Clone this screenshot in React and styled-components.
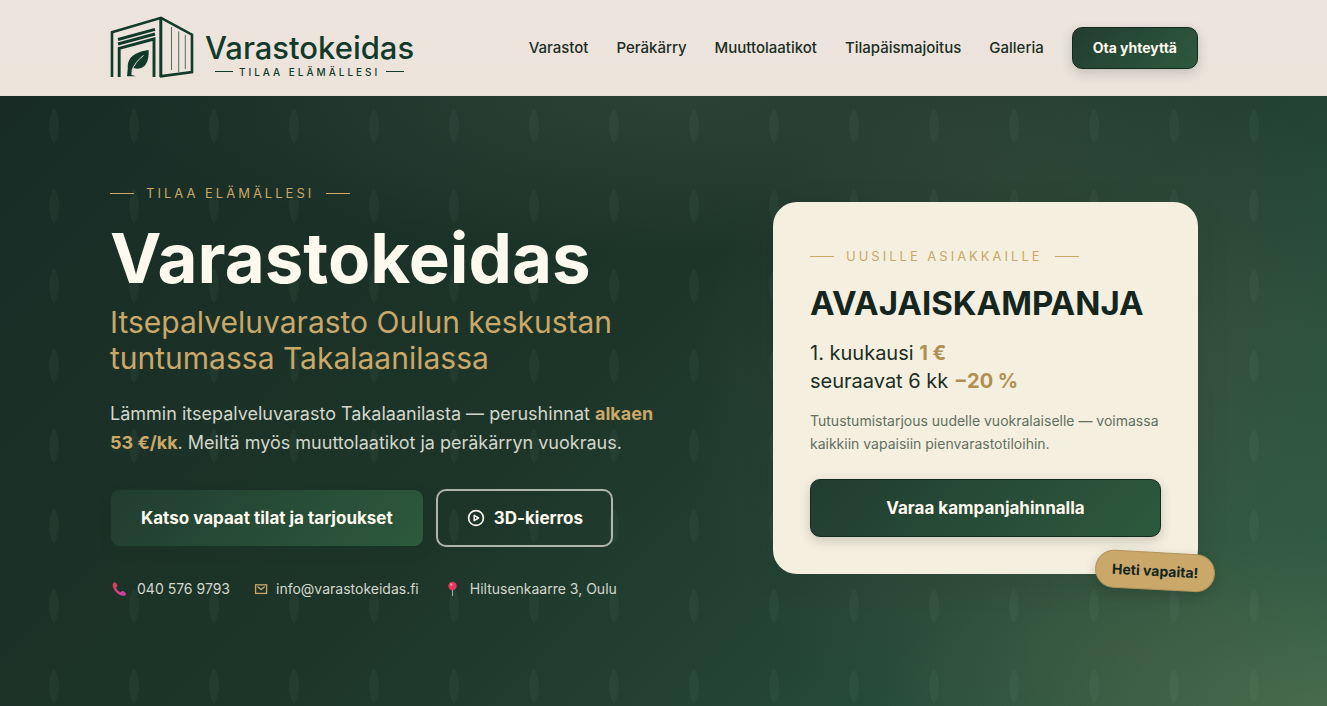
import React from "react"
import styled, { createGlobalStyle } from "styled-components"

const GlobalStyle = createGlobalStyle`
  * {
    box-sizing: border-box;
  }
  body {
    margin: 0;
    background: #1c3228;
    font-family: "Inter", sans-serif;
    color: #1a2e24;
  }
  h1, h2, p {
    margin: 0;
  }
`

const Page = styled.div`
  min-height: 100vh;
  display: flex;
  flex-direction: column;
`

const HeaderBar = styled.header`
  background: linear-gradient(180deg, #ede4df 0%, #ece3da 100%);
  border-bottom: 1px solid #e6dfd2;
  padding: 0 19px 0 0;
`

const Container = styled.div`
  width: 100%;
  max-width: 1088px;
  margin: 0 auto;
`

const HeaderInner = styled(Container)`
  min-height: 95px;
  display: flex;
  align-items: center;
  justify-content: space-between;
`

const Logo = styled.a`
  display: flex;
  align-items: center;
  gap: 11px;
  color: #123a2a;
  text-decoration: none;
`

const LogoMark = styled.svg`
  width: 84px;
  height: 64px;
`

const LogoWords = styled.span`
  display: flex;
  flex-direction: column;
  align-items: center;
  padding-top: 12px;
`

const LogoName = styled.span`
  font-size: 31px;
  line-height: 36px;
  font-weight: 500;
`

const LogoTag = styled.span`
  display: flex;
  align-items: center;
  gap: 6px;
  font-size: 10px;
  line-height: 12px;
  font-weight: 500;
  letter-spacing: 3px;

  &::before,
  &::after {
    content: "";
    width: 18px;
    height: 1px;
    background: #123a2a;
  }
`

const Nav = styled.nav`
  display: flex;
  align-items: center;
  gap: 28px;
`

const NavLink = styled.a`
  font-size: 15px;
  line-height: 24px;
  font-weight: 500;
  color: #1a2e24;
  text-decoration: none;
`

const PrimaryLink = styled.a`
  display: flex;
  align-items: center;
  justify-content: center;
  min-height: ${props => (props.$small ? "42px" : "58px")};
  padding: 0 ${props => (props.$small ? "20px" : "30px")};
  border: 1px solid ${props => (props.$dim ? "#193427" : "#16291f")};
  border-radius: 10px;
  background: linear-gradient(135deg, #213d30 0%, #2d5a3d 100%);
  background-origin: border-box;
  box-shadow: 0 4px 12px rgba(26, 46, 36, 0.2);
  color: #fdf9ee;
  font-size: ${props => (props.$small ? "14px" : "17px")};
  font-weight: 700;
  text-decoration: none;
  white-space: nowrap;
`

const OutlineLink = styled.a`
  display: flex;
  align-items: center;
  gap: 9px;
  min-height: 58px;
  padding: 0 28px 0 29px;
  border: 2px solid rgba(253, 249, 238, 0.65);
  border-radius: 10px;
  color: #fdf9ee;
  font-size: 17px;
  font-weight: 700;
  text-decoration: none;
  white-space: nowrap;
`

const Hero = styled.main`
  position: relative;
  flex: 1;
  padding: 80px 19px 80px 0;
  background:
    radial-gradient(ellipse 42% 26% at 50% 0%, rgba(245, 239, 223, 0.08), transparent 100%),
    radial-gradient(ellipse 28% 60% at 80% 50%, rgba(201, 168, 106, 0.13), transparent 100%),
    radial-gradient(ellipse 34% 28% at 100% 100%, rgba(201, 168, 106, 0.17), transparent 100%),
    linear-gradient(135deg, #182c25 0%, #1d3529 45%, #244535 70%, #2f5f47 100%);
`

const LeafPattern = styled.svg`
  position: absolute;
  inset: 0;
  width: 100%;
  height: 100%;
`

const HeroGrid = styled(Container)`
  position: relative;
  display: grid;
  grid-template-columns: minmax(0, 7fr) minmax(0, 5fr);
  column-gap: 68px;
  align-items: center;
`

const Intro = styled.div`
  display: flex;
  flex-direction: column;
  align-items: flex-start;
`

const Eyebrow = styled.p`
  display: flex;
  align-items: center;
  gap: 12px;
  color: #c9a86a;
  font-size: 13px;
  line-height: 35px;
  font-weight: 400;
  letter-spacing: 3px;
  text-transform: uppercase;

  &::before,
  &::after {
    content: "";
    width: 24px;
    height: 1px;
    background: #c9a86a;
  }
`

const Title = styled.h1`
  margin-top: 9px;
  color: #fdf9ee;
  font-size: 69px;
  line-height: 76px;
  font-weight: 700;
`

const Subtitle = styled.p`
  margin-top: 8px;
  color: #c9a86a;
  font-size: 30px;
  line-height: 36px;
`

const Lead = styled.p`
  max-width: 560px;
  margin-top: 23px;
  color: #d3d7cb;
  font-size: 18px;
  line-height: 29px;

  strong {
    color: #c9a86a;
    font-weight: 700;
  }
`

const Actions = styled.div`
  display: flex;
  flex-wrap: wrap;
  gap: 12px;
  margin-top: 32px;
`

const Contacts = styled.div`
  display: flex;
  flex-wrap: wrap;
  gap: 24px;
  margin-top: 32px;
`

const Contact = styled.a`
  display: flex;
  align-items: center;
  gap: 8px;
  color: #d3d7cb;
  font-size: 14px;
  line-height: 20px;
  text-decoration: none;
`

const Card = styled.section`
  position: relative;
  padding: 37px;
  border-radius: 24px;
  background: #f5efdf;
  box-shadow: 0 8px 32px rgba(20, 36, 28, 0.1);
`

const CardTitle = styled.h2`
  margin-top: 7px;
  color: #14261e;
  font-size: 33px;
  line-height: 44px;
  font-weight: 700;
`

const Offer = styled.p`
  margin-top: 14px;
  color: #1a2e24;
  font-size: 20px;
  line-height: 28px;

  strong {
    color: #b08f52;
    font-weight: 700;
  }
`

const Terms = styled.p`
  margin: 14px 0 24px;
  color: #62705f;
  font-size: 14px;
  line-height: 23px;
`

const Badge = styled.span`
  position: absolute;
  right: -17px;
  bottom: -16px;
  padding: 8px 16px;
  border: 1px solid #b39459;
  border-radius: 19px;
  background: #c9a86a;
  box-shadow: 0 4px 12px rgba(20, 36, 28, 0.2);
  color: #14261e;
  font-size: 14px;
  line-height: 20px;
  font-weight: 700;
  transform: rotate(3deg);
`

const links = ["Varastot", "Peräkärry", "Muuttolaatikot", "Tilapäismajoitus", "Galleria"]

function ContainerLogo() {
  return (
    <LogoMark viewBox="0 1 84 64" fill="none" stroke="currentColor" aria-hidden="true">
      <path d="M2 62V17.2L51 2.8L82 19.7V57L50 61.4" strokeWidth="2.6" />
      <path d="M50.8 2.5V62" strokeWidth="3" />
      <path d="M8 24.5L45 14.4M8 29L45 19" strokeWidth="2.9" />
      <path d="M9.2 62V33.4L44 24V62" strokeWidth="2.9" />
      <path d="M61.5 12V55M68.7 16.5V57M75.3 20V54" strokeWidth="0.7" />
      <path
        d="M38.6 35C29 36.5 17 40 17.8 53L17 61.2H26L21.5 60C21 57 22 55 23.5 53C34 56 39.5 48 38.6 35Z"
        fill="currentColor"
        stroke="none"
      />
      <path d="M21.8 55.5C24 50 28 44.5 33.5 40.5" stroke="#ede4dd" strokeWidth="1" />
    </LogoMark>
  )
}

function PlayIcon() {
  return (
    <svg width="18" height="18" viewBox="0 0 18 18" fill="none" stroke="currentColor" strokeWidth="1.7" aria-hidden="true">
      <circle cx="9" cy="9" r="7.4" />
      <path d="M7.2 6.3V11.7L11.6 9Z" strokeLinejoin="round" strokeWidth="1.5" />
    </svg>
  )
}

function PhoneIcon() {
  return (
    <svg width="19" height="16" viewBox="0 0 19 16" aria-hidden="true">
      <defs>
        <linearGradient id="phone" x1="0" y1="0" x2="1" y2="1">
          <stop offset="0" stopColor="#e23a55" />
          <stop offset="1" stopColor="#c940a4" />
        </linearGradient>
      </defs>
      <path
        d="M4.8 1.3C3 1.5 2.2 3.5 3 6C4.4 10.5 8.5 14.2 13 14.8C15 15 16.2 14 16 12.7C15.8 11.6 13.5 9.8 12.4 9.9C11.4 10 11.2 11.2 10.2 11C8.8 10.6 6.7 8.5 6.2 7C6 6.1 7.3 5.9 7.3 4.8C7.3 3.7 6.1 1.2 4.8 1.3Z"
        fill="url(#phone)"
      />
    </svg>
  )
}

function MailIcon() {
  return (
    <svg width="14" height="16" viewBox="0 0 14 16" fill="none" stroke="#c9a86a" strokeWidth="1.3" aria-hidden="true">
      <rect x="1.6" y="3.8" width="11" height="8.6" />
      <path d="M3.4 5.6L7.1 8.6L10.8 5.6" />
    </svg>
  )
}

function PinIcon() {
  return (
    <svg width="19" height="16" viewBox="0 0 19 16" aria-hidden="true">
      <path d="M9.5 8V15" stroke="#9aa39c" strokeWidth="1.1" />
      <circle cx="9.5" cy="5" r="4.2" fill="#e2375c" />
      <circle cx="8.3" cy="3.6" r="1.3" fill="#f58aa0" />
    </svg>
  )
}

export default function App() {
  return (
    <Page>
      <GlobalStyle />
      <HeaderBar>
        <HeaderInner>
          <Logo href="#">
            <ContainerLogo />
            <LogoWords>
              <LogoName>Varastokeidas</LogoName>
              <LogoTag>TILAA ELÄMÄLLESI</LogoTag>
            </LogoWords>
          </Logo>
          <Nav>
            {links.map(link => (
              <NavLink key={link} href="#">
                {link}
              </NavLink>
            ))}
            <PrimaryLink $small href="#">
              Ota yhteyttä
            </PrimaryLink>
          </Nav>
        </HeaderInner>
      </HeaderBar>
      <Hero>
        <LeafPattern aria-hidden="true">
          <defs>
            <pattern id="leaves" x="14" width="80" height="80" patternUnits="userSpaceOnUse">
              <path d="M40 12Q50 30 40 48Q30 30 40 12Z" fill="#a9c4ae" fillOpacity="0.05" />
            </pattern>
          </defs>
          <rect width="100%" height="100%" fill="url(#leaves)" />
        </LeafPattern>
        <HeroGrid>
          <Intro>
            <Eyebrow>Tilaa elämällesi</Eyebrow>
            <Title>Varastokeidas</Title>
            <Subtitle>Itsepalveluvarasto Oulun keskustan tuntumassa Takalaanilassa</Subtitle>
            <Lead>
              Lämmin itsepalveluvarasto Takalaanilasta — perushinnat <strong>alkaen 53 €/kk</strong>.
              Meiltä myös muuttolaatikot ja peräkärryn vuokraus.
            </Lead>
            <Actions>
              <PrimaryLink $dim href="#">
                Katso vapaat tilat ja tarjoukset
              </PrimaryLink>
              <OutlineLink href="#">
                <PlayIcon />
                3D-kierros
              </OutlineLink>
            </Actions>
            <Contacts>
              <Contact href="tel:0405769793">
                <PhoneIcon />
                040 576 9793
              </Contact>
              <Contact href="mailto:info@varastokeidas.fi">
                <MailIcon />
                info@varastokeidas.fi
              </Contact>
              <Contact href="#">
                <PinIcon />
                Hiltusenkaarre 3, Oulu
              </Contact>
            </Contacts>
          </Intro>
          <Card>
            <Eyebrow>Uusille asiakkaille</Eyebrow>
            <CardTitle>AVAJAISKAMPANJA</CardTitle>
            <Offer>
              1. kuukausi <strong>1 €</strong>
              <br />
              seuraavat 6 kk <strong>−20 %</strong>
            </Offer>
            <Terms>
              Tutustumistarjous uudelle vuokralaiselle — voimassa kaikkiin vapaisiin
              pienvarastotiloihin.
            </Terms>
            <PrimaryLink href="#">Varaa kampanjahinnalla</PrimaryLink>
            <Badge>Heti vapaita!</Badge>
          </Card>
        </HeroGrid>
      </Hero>
    </Page>
  )
}
